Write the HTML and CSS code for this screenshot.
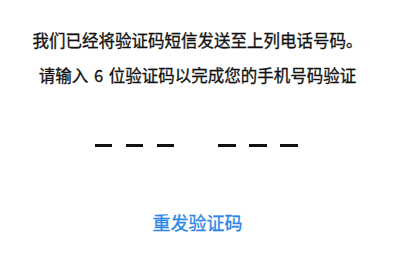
FILE: index.html
```html
<!DOCTYPE html>
<html lang="zh-CN">
<head>
<meta charset="utf-8">
<title>验证码</title>
<link rel="stylesheet" href="styles.css">
</head>
<body>
<main class="verify">
  <p class="line line-first">我们已经将验证码短信发送至上列电话号码。</p>
  <p class="line line-second">请输入 6 位验证码以完成您的手机号码验证</p>
  <div class="code-row">
    <div class="code-group">
      <span class="slot"></span>
      <span class="slot"></span>
      <span class="slot"></span>
    </div>
    <div class="code-group">
      <span class="slot"></span>
      <span class="slot"></span>
      <span class="slot"></span>
    </div>
  </div>
  <button class="resend" type="button">重发验证码</button>
</main>
</body>
</html>
```

FILE: styles.css
```css
html, body {
  margin: 0;
  padding: 0;
  background: #ffffff;
}

body {
  font-family: "Noto Sans CJK SC", "Noto Sans", sans-serif;
  color: #111111;
}

.verify {
  display: flex;
  flex-direction: column;
  align-items: center;
  padding-top: 28px;
}

.line {
  margin: 0;
  font-size: 16.5px;
  font-weight: 400;
  line-height: 24px;
  text-align: center;
  white-space: nowrap;
  -webkit-text-stroke: 0.3px #111111;
}

.line-second {
  margin-top: 11px;
  word-spacing: 2px;
}

.code-row {
  display: flex;
  justify-content: center;
  gap: 44px;
  margin-top: 57px;
  padding-right: 3px;
}

.code-group {
  display: flex;
  gap: 13.5px;
}

.slot {
  display: block;
  width: 17.5px;
  height: 3px;
  background: #111111;
}

.resend {
  margin-top: 62px;
  padding: 0;
  border: none;
  background: none;
  font-family: inherit;
  font-size: 18px;
  font-weight: 400;
  line-height: 26px;
  color: #2b86e6;
  cursor: pointer;
  -webkit-text-stroke: 0.3px #2b86e6;
}
```
